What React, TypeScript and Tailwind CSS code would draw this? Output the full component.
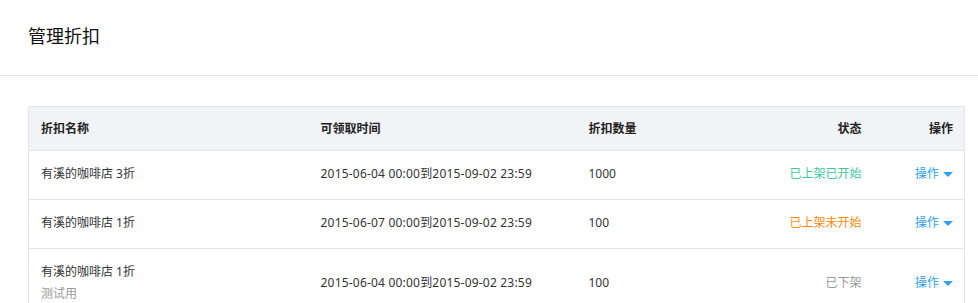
const FONT = "font-['Noto_Sans','Noto_Sans_CJK_SC',sans-serif]";

type Row = {
  name: string;
  note?: string;
  time: string;
  count: string;
  status: string;
  statusClass: string;
};

const ROWS: Row[] = [
  {
    name: "有溪的咖啡店 3折",
    time: "2015-06-04 00:00到2015-09-02 23:59",
    count: "1000",
    status: "已上架已开始",
    statusClass: "text-[#3cc99b]",
  },
  {
    name: "有溪的咖啡店 1折",
    time: "2015-06-07 00:00到2015-09-02 23:59",
    count: "100",
    status: "已上架未开始",
    statusClass: "text-[#ff8a00]",
  },
  {
    name: "有溪的咖啡店 1折",
    note: "测试用",
    time: "2015-06-04 00:00到2015-09-02 23:59",
    count: "100",
    status: "已下架",
    statusClass: "text-[#999999]",
  },
];

function ActionLink() {
  return (
    <button type="button" className="inline-flex items-center gap-[4px] text-[#2ba3ee]">
      操作
      <span className="h-0 w-0 border-x-[5px] border-t-[5px] border-x-transparent border-t-[#2ba3ee]" />
    </button>
  );
}

export default function App() {
  return (
    <div className={`min-h-screen bg-white text-[#333333] ${FONT}`}>
      <div className="flex h-[76px] items-center border-b border-[#e5e5e5] pb-[4px] pl-[28px]">
        <h1 className="text-[18px] font-normal leading-none text-[#111111]">管理折扣</h1>
      </div>

      <div className="pl-[28px] pr-[13px] pt-[30px]">
        <table className="w-full table-fixed border-collapse border border-[#e5e5e5] text-[12px]">
          <colgroup>
            <col className="w-[280px]" />
            <col className="w-[268px]" />
            <col className="w-[124px]" />
            <col className="w-[173px]" />
            <col />
          </colgroup>
          <thead>
            <tr className="h-[44px] bg-[#f2f3f7] text-left font-bold text-[#222222]">
              <th className="pl-[12px]">折扣名称</th>
              <th className="pl-[12px]">可领取时间</th>
              <th className="pl-[12px]">折扣数量</th>
              <th className="pr-[12px] text-right">状态</th>
              <th className="pr-[11px] text-right">操作</th>
            </tr>
          </thead>
          <tbody>
            {ROWS.map((row, index) => (
              <tr key={index} className="border-t border-[#e5e5e5]">
                <td className="pb-[14px] pl-[12px] pt-[12px] leading-[22px]">
                  <div>{row.name}</div>
                  {row.note && <div className="text-[#999999]">{row.note}</div>}
                </td>
                <td className="pb-[2px] pl-[12px] tracking-[0.2px]">{row.time}</td>
                <td className="pb-[2px] pl-[12px]">{row.count}</td>
                <td className={`pb-[2px] pr-[12px] text-right ${row.statusClass}`}>{row.status}</td>
                <td className="pb-[2px] pr-[11px] text-right">
                  <ActionLink />
                </td>
              </tr>
            ))}
          </tbody>
        </table>
      </div>
    </div>
  );
}
